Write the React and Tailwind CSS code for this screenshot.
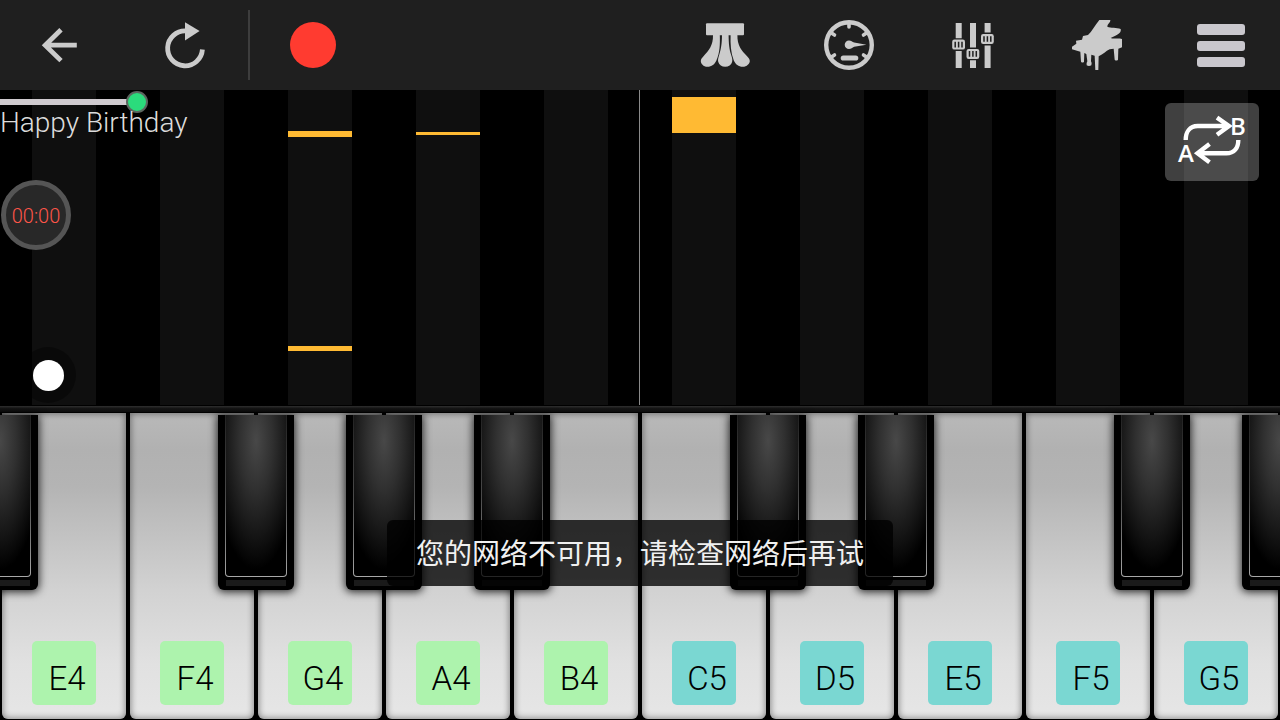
import React, { useState } from 'react';

const lanes = [
  { name: 'E4', sharp: true, notes: [] },
  { name: 'F4', sharp: false, notes: [] },
  { name: 'G4', sharp: true, notes: [{ top: 41, height: 6 }, { top: 256, height: 5 }] },
  { name: 'A4', sharp: true, notes: [{ top: 42, height: 3 }] },
  { name: 'B4', sharp: true, notes: [] },
  { name: 'C5', sharp: false, notes: [{ top: 7, height: 36 }] },
  { name: 'D5', sharp: true, notes: [] },
  { name: 'E5', sharp: true, notes: [] },
  { name: 'F5', sharp: false, notes: [] },
  { name: 'G5', sharp: true, notes: [] },
];

const BackIcon = () => (
  <svg className="size-[50px]" viewBox="0 0 50 50" fill="none" stroke="#cbcbcb" strokeWidth="4.8">
    <path d="M24 9.8 8.2 25.2 24 40.6M8 25.2h31.8" />
  </svg>
);

const RestartIcon = () => (
  <svg className="size-[50px]" viewBox="0 0 50 50">
    <path d="M41.4 29.5A17.4 17.4 0 1 1 25 11" fill="none" stroke="#cbcbcb" strokeWidth="4.8" />
    <path d="M24 2.2 38.6 11 24 20.4Z" fill="#cbcbcb" />
  </svg>
);

const PedalsIcon = () => (
  <svg className="size-[50px]" viewBox="0 0 50 50" fill="#cbcbcb">
    <rect x="6" y="3.300" width="38" height="11.900" rx="1" />
    <path d="M13 15h6.800c.3 9 .2 17.500-3.400 25.500-1.600 3.800-4.800 6.300-8.900 6.300-4.200 0-6.700-3.200-6.700-5.800 0-1.900 1.200-3.200 2.700-4.800C8.800 30.600 13.200 25.500 13 15Z" />
    <path d="M22 15h6.600c.1 9 .7 14 2.400 19.500 1.400 4.300 1.600 5.500 1.100 7.500-.8 3-3.500 4.800-6.900 4.800s-6-1.800-6.900-4.800c-.5-2-.3-3.200 1-7.500C21 29 21.900 24 22 15Z" />
    <path d="M37.400 15h-6.800c-.3 9 .2 17.500 3.200 25.500 1.600 3.800 4.800 6.300 8.900 6.300 4.200 0 7.100-3.200 7.100-5.800 0-1.900-1.200-3.200-2.700-4.800C41.400 30.600 37.200 25.500 37.400 15Z" />
  </svg>
);

const TempoIcon = () => (
  <svg className="size-[50px]" viewBox="0 0 50 50">
    <g fill="none" stroke="#cbcbcb" strokeLinecap="round">
      <circle cx="25" cy="25" r="22.800" strokeWidth="4.400" />
      <path strokeWidth="3.600" d="M25 4v3M7.500 13l3 2M42.500 13l-3 2M7.500 37l3-2M42.500 37l-3-2" />
      <path strokeWidth="5.200" d="M19.300 38h12.400" />
    </g>
    <path d="M25 20.400c2.200 0 3.200 1.400 5.200 2.200L42.400 24.800 30.200 26.800c-2 .8-3 2.200-5.200 2.200a4.300 4.300 0 0 1 0-8.600Z" fill="#cbcbcb" />
  </svg>
);

const MixerIcon = () => (
  <svg className="size-[50px]" viewBox="0 0 50 50">
    <path d="M7.700 3h6v15.200h-6ZM7.700 31h6v17h-6ZM22 3h6v24.500h-6ZM22 40.200h6V48h-6ZM36.600 3h6v9.600h-6ZM36.600 25.400h6V48h-6Z" fill="#cbcbcb" />
    {[[4.200, 19.600], [18.500, 28.900], [33, 14]].map(([x, y]) => (
      <g key={x} transform={`translate(${x} ${y})`}>
        <rect width="12.800" height="10" rx="2.200" fill="#cbcbcb" />
        <path d="M3 2.200v5.600M6.400 2.200v5.600M9.800 2.200v5.600" stroke="#1f1f1f" strokeWidth="1.500" />
      </g>
    ))}
  </svg>
);

const PianoIcon = () => (
  <svg className="size-[50px]" viewBox="0 0 150 150" fill="#cbcbcb">
    <path d="M82 0h33c1 7-9 12-9 20 10 4 28 2 40 7 2 9-4 15-16 20l-14 7c9 4 21-1 34 3v25l-11 4-1 33q-5 5-10 0l-3-33-12 2c-12 5-19 15-33 21l-1 41h-9l-2-43-10-3-1 20q4 6 1 12-7 4-14 0-2-6 2-12l-3-22-6-3-1 26q-4 5-9 0l-2-30L0 88v-8l13-9-1-9 18-3 3-11 15-3C60 34 68 18 82 0Z" />
  </svg>
);

const LoopIcon = () => (
  <svg className="h-[78px] w-[94px]" viewBox="0 0 94 78">
    <g fill="none" stroke="#fff" strokeWidth="4.400">
      <path d="M20.700 37c0-8 4-14 12-14H63M52 14.600 64 23l-12 8.800" />
      <path d="M73.300 37c0 8-4 13.300-12 13.300H32M44.500 41 32.500 50.300l12 9" />
    </g>
    <g fill="#fff" className="font-['Open_Sans'] text-[24px] font-semibold">
      <text x="13" y="59">A</text>
      <text x="65" y="32">B</text>
    </g>
  </svg>
);

const ToolButton = ({ label, className = '', children }) => (
  <button
    aria-label={label}
    className={`flex w-31 items-center justify-center ${className}`}
  >
    {children}
  </button>
);

const Toolbar = () => (
  <header className="flex h-[90px] shrink-0 items-center justify-between bg-[#1f1f1f]">
    <div className="flex items-center">
      <ToolButton label="Back"><BackIcon /></ToolButton>
      <ToolButton label="Restart"><RestartIcon /></ToolButton>
      <div className="h-[70px] w-0.5 bg-[#3d3d3d]" />
      <ToolButton label="Record" className="pl-0.5">
        <span className="size-[46px] rounded-full bg-[#ff3b30]" />
      </ToolButton>
    </div>
    <div className="flex items-center">
      <ToolButton label="Pedals" className="pl-1.5"><PedalsIcon /></ToolButton>
      <ToolButton label="Tempo" className="pl-1.5"><TempoIcon /></ToolButton>
      <ToolButton label="Mixer" className="pl-1.5"><MixerIcon /></ToolButton>
      <ToolButton label="Instrument" className="pl-1.5"><PianoIcon /></ToolButton>
      <ToolButton label="Menu" className="pl-1.5">
        <span className="flex w-12 flex-col gap-1.5">
          <span className="h-[11px] rounded-[3px] bg-[#c9c7cd]" />
          <span className="h-[10px] rounded-[3px] bg-[#c9c7cd]" />
          <span className="h-[10px] rounded-[3px] bg-[#c9c7cd]" />
        </span>
      </ToolButton>
    </div>
  </header>
);

const Lane = ({ lane }) => (
  <div className={lane.name === 'B4' ? 'border-r border-[#8a8a8a] px-[25%] pr-[calc(25%-1px)]' : 'px-[25%]'}>
    <div className="relative h-full bg-[#0f0f0f]">
      {/* Falling notes */}
      {lane.notes.map((note) => (
        <div
          key={note.top}
          className="absolute inset-x-0 bg-[#ffba33]"
          style={{ top: note.top, height: note.height }}
        />
      ))}
    </div>
  </div>
);

const PianoRoll = () => {
  const [progress, setProgress] = useState(10);

  return (
    <section className="relative grid flex-1 grid-cols-10 bg-black">
      {lanes.map((lane) => (
        <Lane key={lane.name} lane={lane} />
      ))}

      {/* Song progress, title and timer */}
      <div className="absolute inset-0 flex flex-col items-start">
        <input
          type="range"
          aria-label="Song progress"
          value={progress}
          onChange={(e) => setProgress(Number(e.target.value))}
          style={{ backgroundSize: `${progress}% 6px` }}
          className="mt-px h-[22px] w-full appearance-none bg-transparent bg-[linear-gradient(#cfcacf,#cfcacf)] bg-left bg-no-repeat [&::-webkit-slider-thumb]:size-[22px] [&::-webkit-slider-thumb]:appearance-none [&::-webkit-slider-thumb]:rounded-full [&::-webkit-slider-thumb]:border-2 [&::-webkit-slider-thumb]:border-[#5c6660] [&::-webkit-slider-thumb]:bg-[#2bdb7c]"
        />
        <h1 className="-mt-1.5 h-8 font-['Roboto',sans-serif] text-[28px] leading-8 font-light text-[#dcdcdc]">
          Happy Birthday
        </h1>
        <div className="mt-[41px] ml-px flex size-[70px] items-center justify-center rounded-full border-5 border-[#555555] bg-[#282828] pt-0.5 font-['Roboto',sans-serif] text-[20px] font-light text-[#ff5548]">
          00:00
        </div>
        <button
          aria-label="Scroll handle"
          className="mt-[97px] ml-5 flex size-14 items-center justify-center rounded-full bg-black/40"
        >
          <span className="size-[31px] rounded-full bg-white" />
        </button>
      </div>

      <button
        aria-label="Loop A to B"
        className="absolute top-[13px] right-[21px] rounded-md bg-white/25"
      >
        <LoopIcon />
      </button>
    </section>
  );
};

const BlackKey = ({ label, className }) => (
  <button
    aria-label={label}
    className={`absolute top-0.5 z-10 flex h-[175px] w-[76px] flex-col items-center rounded-b-md bg-black shadow-[0_1px_8px_1px_rgba(0,0,0,0.8)] ${className}`}
  >
    <span className="h-[162px] w-[62px] rounded-b-[4px] bg-linear-to-b from-[#222222] via-[#4a4a4a] to-[#a8a8a8] px-px pb-px">
      <span className="block size-full rounded-b-[3px] bg-[radial-gradient(ellipse_72%_80%_at_50%_16%,#484848,#303030_38%,#141414_75%,#000)]" />
    </span>
    <span className="mt-[3px] h-1.5 w-[60px] bg-[#1a1a1a]" />
  </button>
);

const Key = ({ lane, last }) => (
  <div className="relative flex flex-1 px-0.5 pb-px">
    <button className="flex flex-1 items-end justify-center rounded-b-[6px] bg-[linear-gradient(#b9b9b9,#b1b1b1_12%,#b4b4b4_24%,#d2d2d2_58%,#e1e1e1_82%,#e6e6e6)] pb-3.5 shadow-[inset_0_0_6px_1px_rgba(0,0,0,0.4)]">
      <span
        className={`flex size-16 items-center justify-center rounded-[5px] pt-2.5 pl-1.5 font-['Roboto',sans-serif] text-[33px] leading-none font-light text-black ${
          lane.name.endsWith('4') ? 'bg-[#adf3ad]' : 'bg-[#7ad7d2]'
        }`}
      >
        {lane.name}
      </span>
    </button>
    {lane.sharp && <BlackKey label={`${lane.name} flat`} className="-left-[38px]" />}
    {last && <BlackKey label={`${lane.name} sharp`} className="-right-[38px]" />}
  </div>
);

const Keyboard = () => (
  <section className="shrink-0 overflow-hidden bg-black">
    <div className="h-2 border-y border-black bg-linear-to-b from-[#303030] via-[#151515] via-40% to-[#0c0c0c]" />
    <div className="flex h-[307px]">
      {lanes.map((lane, i) => (
        <Key key={lane.name} lane={lane} last={i === lanes.length - 1} />
      ))}
    </div>
  </section>
);

const App = () => {
  return (
    <main className="relative flex min-h-screen flex-col overflow-hidden bg-black">
      <Toolbar />
      <PianoRoll />
      <Keyboard />

      {/* Network toast */}
      <div className="pointer-events-none absolute inset-x-0 bottom-[134px] z-20 flex justify-center">
        <p
          role="status"
          className="rounded-md bg-black/78 px-[29px] pt-3 pb-3.5 font-['Noto_Sans_CJK_SC',sans-serif] text-[28px] leading-10 font-normal text-[#f0f0f0]"
        >
          您的网络不可用，请检查网络后再试
        </p>
      </div>
    </main>
  );
};

export default App;
